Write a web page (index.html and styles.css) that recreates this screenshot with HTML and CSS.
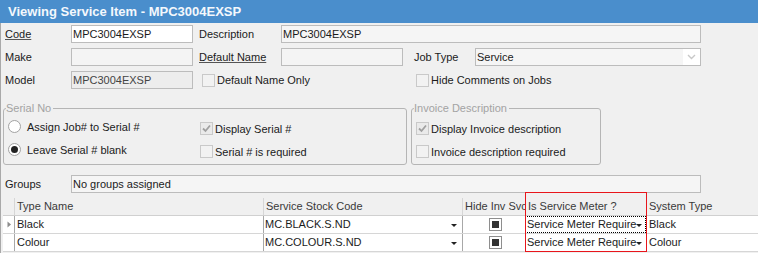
FILE: index.html
```html
<!DOCTYPE html>
<html lang="en">
<head>
  <meta charset="UTF-8" />
  <title>Viewing Service Item</title>
  <link rel="stylesheet" href="styles.css">
</head>
<body>
  <div class="titlebar">Viewing Service Item - MPC3004EXSP</div>
  <div class="form">
    <div class="row">
      <span class="lbl"><u>Code</u></span>
      <div class="field white">MPC3004EXSP</div>
      <span class="lbl2">Description</span>
      <div class="field desc">MPC3004EXSP</div>
    </div>
    <div class="row">
      <span class="lbl">Make</span>
      <div class="field"></div>
      <span class="lbl2"><u>Default Name</u></span>
      <div class="field"></div>
      <span class="lbl3">Job Type</span>
      <div class="field select">
        <span>Service</span>
        <span class="drop">
          <svg width="9" height="6" viewBox="0 0 9 6"><path d="M1 1 L4.5 4.5 L8 1" fill="none" stroke="#c8c8c8" stroke-width="1.4"/></svg>
        </span>
      </div>
    </div>
    <div class="row">
      <span class="lbl">Model</span>
      <div class="field model">MPC3004EXSP</div>
      <label class="check first"><span class="box"></span>Default Name Only</label>
      <label class="check"><span class="box"></span>Hide Comments on Jobs</label>
    </div>

    <div class="groups-wrap">
      <div class="group serial">
        <div class="legend">Serial No</div>
        <div class="group-body">
          <div class="col col-radio">
            <label class="radio"><span class="dot"></span>Assign Job# to Serial #</label>
            <label class="radio"><span class="dot on"></span>Leave Serial # blank</label>
          </div>
          <div class="col col-check">
            <label class="check"><span class="box ticked">
              <svg width="11" height="11" viewBox="0 0 11 11"><path d="M2 5.5 L4.5 8 L9 2.5" fill="none" stroke="#a0a0a0" stroke-width="1.8"/></svg>
            </span>Display Serial #</label>
            <label class="check"><span class="box"></span>Serial # is required</label>
          </div>
        </div>
      </div>
      <div class="group invoice">
        <div class="legend">Invoice Description</div>
        <div class="group-body">
          <div class="col col-check inv">
            <label class="check"><span class="box ticked">
              <svg width="11" height="11" viewBox="0 0 11 11"><path d="M2 5.5 L4.5 8 L9 2.5" fill="none" stroke="#a0a0a0" stroke-width="1.8"/></svg>
            </span>Display Invoice description</label>
            <label class="check"><span class="box"></span>Invoice description required</label>
          </div>
        </div>
      </div>
    </div>

    <div class="row groups-row">
      <span class="lbl">Groups</span>
      <div class="field groups">No groups assigned</div>
    </div>

    <div class="grid">
      <div class="gr head">
        <div class="c rh"></div>
        <div class="c">Type Name</div>
        <div class="c">Service Stock Code</div>
        <div class="c">Hide Inv Svc</div>
        <div class="c">Is Service Meter ?</div>
        <div class="c">System Type</div>
      </div>
      <div class="gr">
        <div class="c rh"><svg width="5" height="7" viewBox="0 0 5 7"><path d="M0.5 0.5 L4 3.5 L0.5 6.5 Z" fill="#8c8c8c"/></svg></div>
        <div class="c">Black</div>
        <div class="c dd">MC.BLACK.S.ND<span class="arrow"></span></div>
        <div class="c mid"><span class="cb"><span></span></span></div>
        <div class="c dd focus">Service Meter Require<span class="arrow"></span></div>
        <div class="c">Black</div>
      </div>
      <div class="gr">
        <div class="c rh"></div>
        <div class="c">Colour</div>
        <div class="c dd">MC.COLOUR.S.ND<span class="arrow"></span></div>
        <div class="c mid"><span class="cb"><span></span></span></div>
        <div class="c dd">Service Meter Require<span class="arrow"></span></div>
        <div class="c">Colour</div>
      </div>
      <div class="highlight"></div>
    </div>
  </div>
</body>
</html>
```

FILE: styles.css
```css
* {
  box-sizing: border-box;
}
body {
  margin: 0;
  background: #f0f0f0;
  font-family: 'Liberation Sans', Arial, sans-serif;
  font-size: 11px;
  color: #1b1b1b;
  width: 758px;
  height: 253px;
  overflow: hidden;
}
.titlebar {
  height: 23px;
  background: #4a8ecc;
  color: #f4f8fc;
  font-weight: bold;
  font-size: 13px;
  line-height: 23px;
  padding-left: 8px;
}
.form {
  border-left: 1px solid #a9a9a9;
  padding-top: 2px;
  height: 230px;
}
.row {
  display: flex;
  align-items: center;
  height: 18px;
  margin-bottom: 5px;
}
.lbl {
  width: 70px;
  padding-left: 4px;
}
.lbl2 {
  width: 82px;
  margin-left: 6px;
}
.lbl3 {
  width: 61px;
  margin-left: 11px;
}
u {
  text-decoration-color: #555;
}
.field {
  width: 122px;
  height: 18px;
  border: 1px solid #bcbcbc;
  background: #f4f4f4;
  padding-left: 1px;
  line-height: 16px;
  white-space: nowrap;
  overflow: hidden;
}
.field.white {
  background: #fff;
}
.field.desc {
  width: 420px;
  background: #f5f5f5;
}
.field.model {
  background: #ededed;
  color: #444;
}
.field.select {
  width: 226px;
  display: flex;
  justify-content: space-between;
  background: #f5f5f5;
}
.drop {
  width: 17px;
  background: #fff;
  display: flex;
  align-items: center;
  justify-content: center;
}
.check {
  display: flex;
  align-items: center;
  gap: 2px;
}
.check.first {
  width: 214px;
  margin-left: 9px;
}
.box {
  width: 13px;
  height: 13px;
  border: 1px solid #c9c9c9;
  background: #f2f2f2;
  display: flex;
  align-items: center;
  justify-content: center;
}
.box.ticked {
  background: #eaeaea;
}
.groups-wrap {
  display: flex;
  margin-top: 19px;
}
.group {
  border: 1px solid #b5b5b5;
  border-radius: 3px;
  height: 57px;
}
.group.serial {
  width: 404px;
  margin-left: 2px;
}
.group.invoice {
  width: 190px;
  margin-left: 4px;
}
.legend {
  width: fit-content;
  height: 13px;
  line-height: 13px;
  margin-top: -7px;
  margin-left: 2px;
  padding: 0 2px 0 0;
  background: #f0f0f0;
  color: #a3a3a3;
}
.group-body {
  display: flex;
}
.col {
  display: flex;
  flex-direction: column;
}
.col .check, .col .radio {
  height: 23px;
}
.col-radio {
  width: 196px;
  padding-left: 4px;
}
.col-check {
  padding-top: 2px;
}
.col-check.inv {
  padding-left: 4px;
}
.radio {
  display: flex;
  align-items: center;
  gap: 6px;
}
.dot {
  width: 13px;
  height: 13px;
  border: 1px solid #a2a2a2;
  border-radius: 50%;
  background: #fff;
  display: flex;
  align-items: center;
  justify-content: center;
}
.dot.on::after {
  content: "";
  width: 7px;
  height: 7px;
  border-radius: 50%;
  background: #222;
}
.groups-row {
  margin-top: 10px;
}
.field.groups {
  width: 630px;
  background: #f5f5f5;
}
.grid {
  position: relative;
  margin-top: 4px;
  margin-left: 2px;
}
.gr {
  display: grid;
  grid-template-columns: 11px 249px 199px 63px 121px 1fr;
  height: 18px;
  border-bottom: 1px solid #d6d6d6;
  background: #fff;
}
.gr.head {
  background: #f0f0f0;
  color: #3a3a3a;
  border-bottom-color: #d0d0d0;
}
.c {
  border-left: 1px solid #a8a8a8;
  padding-left: 2px;
  line-height: 17px;
  white-space: nowrap;
  overflow: hidden;
}
.head .c {
  border-left-color: #d6d6d6;
}
.c.rh {
  border-left: none;
  display: flex;
  align-items: center;
  padding-left: 4px;
}
.c.dd {
  display: flex;
  justify-content: space-between;
  align-items: center;
  padding-left: 1px;
  padding-right: 5px;
}
.c.focus {
  outline: 1px dotted #000;
  outline-offset: -1px;
}
.arrow {
  width: 0;
  height: 0;
  border-left: 3px solid transparent;
  border-right: 3px solid transparent;
  border-top: 3px solid #222;
  margin-top: 2px;
  flex: none;
}
.c.mid {
  display: flex;
  justify-content: center;
  align-items: center;
}
.cb {
  width: 13px;
  height: 13px;
  border: 1px solid #8e8e8e;
  background: #fff;
  display: flex;
  align-items: center;
  justify-content: center;
}
.cb span {
  width: 7px;
  height: 7px;
  background: #333;
}
.highlight {
  position: absolute;
  left: 522px;
  width: 122px;
  top: -6px;
  height: 60px;
  border: 1px solid #e8151b;
  pointer-events: none;
}
```
